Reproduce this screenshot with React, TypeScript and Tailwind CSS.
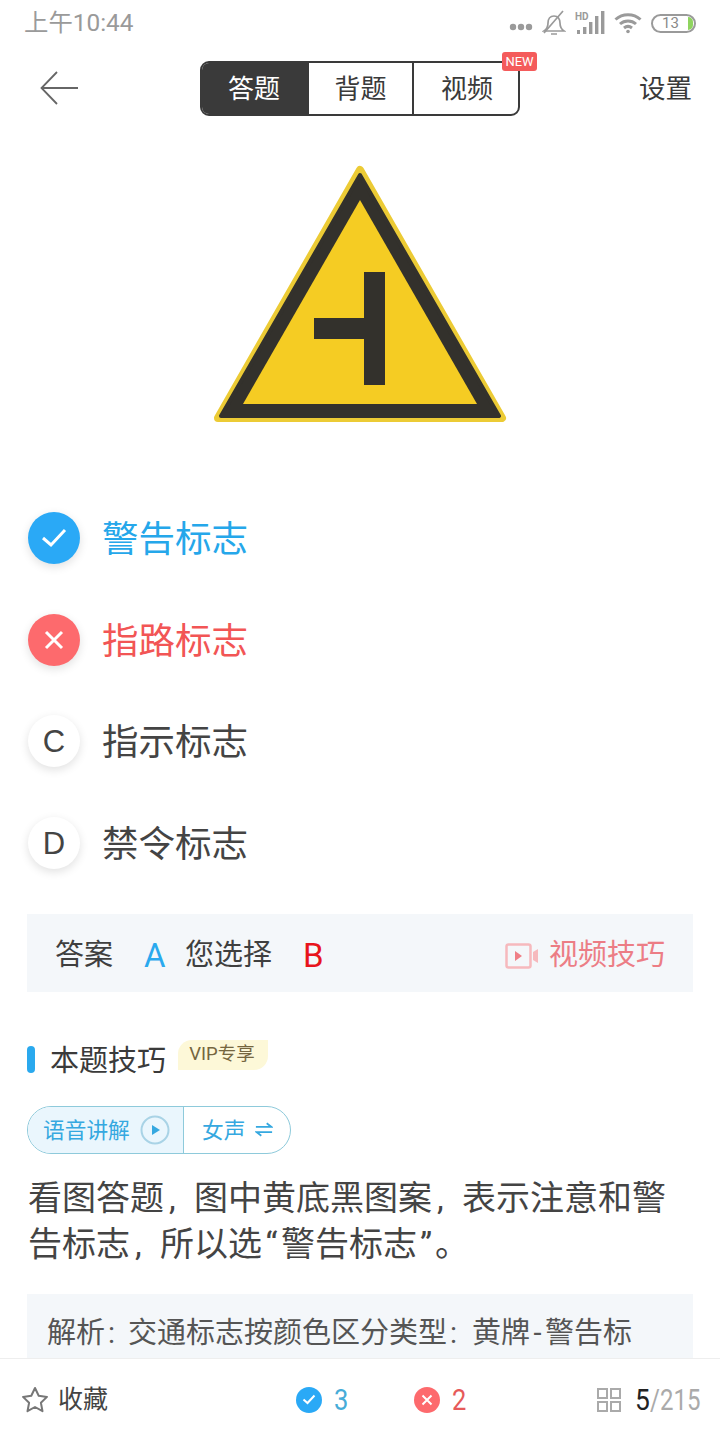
import React from "react";

function Comma() {
  return <span className="inline-block w-[30px] pl-[5px]">,</span>;
}

function Colon({ width }: { width: string }) {
  return <span className={`inline-block pl-[3px] ${width}`}>:</span>;
}

function Option({ mark, text, tone }: { mark: React.ReactNode; text: string; tone: string }) {
  return (
    <div className="flex h-[52px] items-center gap-[22px]">
      {mark}
      <span className={`pt-[4px] text-[36.500px] leading-[52px] ${tone}`}>{text}</span>
    </div>
  );
}

function Circle({ children, bg }: { children: React.ReactNode; bg: string }) {
  return (
    <div className={`flex h-[52px] w-[52px] items-center justify-center rounded-full font-['Liberation_Sans',sans-serif] text-[31px] text-[#444] shadow-[0_3px_10px_rgba(0,0,0,0.12)] ${bg}`}>
      {children}
    </div>
  );
}

function StatusIcons() {
  return (
    <div className="flex items-center gap-[9px]">
      <svg className="mt-[8px]" width="24" height="8" viewBox="0 0 24 8"><g fill="#9a9a9a"><circle cx="4" cy="4" r="3.200" /><circle cx="12" cy="4" r="3.200" /><circle cx="20" cy="4" r="3.200" /></g></svg>
      <svg width="24" height="26" viewBox="0 0 24 26" fill="none" stroke="#9a9a9a" strokeWidth="1.700">
        <path d="M2 21h20c-3-2-4-4-4-8 0-4-2-7-6-7s-6 3-6 7c0 4-1 6-4 8z" />
        <path d="M9 24h6M2 23 21 1" />
      </svg>
      <svg width="30" height="26" viewBox="0 0 30 26">
        <g fill="#9a9a9a">
          <rect x="2" y="20" width="3" height="4" /><rect x="8" y="17" width="3.400" height="7" /><rect x="14" y="12" width="3.400" height="12" /><rect x="20" y="6" width="3.400" height="18" /><rect x="26" y="1" width="3.400" height="23" />
        </g>
        <text x="0" y="10" fontSize="10" fontWeight="700" fill="#9a9a9a" fontFamily="Roboto, sans-serif">HD</text>
      </svg>
      <svg width="28" height="24" viewBox="0 0 28 24" fill="none" stroke="#9a9a9a" strokeWidth="3">
        <path d="M1.500 8.500c7-6.500 18-6.500 25 0M6 13c4.500-4 11.500-4 16 0M10 17c2.500-2 5.500-2 8 0" />
        <circle cx="14" cy="20.500" r="1.800" fill="#9a9a9a" stroke="none" />
      </svg>
      <div className="relative flex h-[19px] w-[45px] items-center justify-center rounded-full border-2 border-[#9a9a9a] pr-[6px] text-[15px] leading-none text-[#8a8a8a]">
        13
        <span className="absolute right-[1px] top-[1px] h-[13px] w-[5px] rounded-r-full bg-[#8fd45f]" />
      </div>
    </div>
  );
}

export default function App() {
  return (
    <div className="flex h-[1440px] w-[720px] flex-col overflow-hidden bg-white font-['Roboto','Noto_Sans_CJK_SC',sans-serif]">
      <div className="flex h-[46px] items-center justify-between px-[24px]">
        <span className="text-[24.400px] leading-none text-[#9a9a9a]">上午10:44</span>
        <StatusIcons />
      </div>

      <div className="relative mt-[15px] flex h-[55px] items-center justify-center">
        <svg className="absolute left-[40px] top-[10px]" width="38" height="34" viewBox="0 0 38 34" fill="none" stroke="#666" strokeWidth="1.800">
          <path d="M38 17H2M17 1 1.500 17 17 33" />
        </svg>
        <div className="relative flex h-[55px] w-[320px] rounded-[9px] border-2 border-[#3a3a3a] text-[26px] text-[#3a3a3a]">
          <div className="flex w-[107px] items-center justify-center rounded-l-[7px] bg-[#3a3a3a] pr-[3px] pt-[1px] text-white">答题</div>
          <div className="flex w-[105px] items-center justify-center border-r-2 border-[#3a3a3a] pt-[1px]">背题</div>
          <div className="flex flex-1 items-center justify-center pl-[2px] pt-[1px]">视频</div>
          <span className="absolute right-[-19px] top-[-11px] flex h-[19px] w-[35px] items-center justify-center rounded-[3px] bg-[#f45b5b] text-[13px] leading-none text-white">NEW</span>
        </div>
        <span className="absolute right-[28px] top-[10px] text-[26.500px] leading-[36px] text-[#3a3a3a]">设置</span>
      </div>

      <div className="flex flex-1 flex-col overflow-hidden">
        <div className="mt-[49px] flex justify-center">
          <svg width="294" height="260" viewBox="0 0 294 260">
            <path d="M147 5 289 253H5z" fill="#eccb35" stroke="#eccb35" strokeWidth="8" strokeLinejoin="round" />
            <path d="M147 10 286 251H8z" fill="#33312c" stroke="#33312c" strokeWidth="4" strokeLinejoin="round" />
            <path d="M147 35 264 239H30z" fill="#f5cc23" />
            <path d="M151 107h21v113h-21v-46H101v-21h50z" fill="#33312c" />
          </svg>
        </div>

        <div className="mt-[87px] flex flex-col gap-[49.500px] pl-[28px]">
          <Option
            tone="text-[#25a7ea]"
            text="警告标志"
            mark={
              <Circle bg="bg-[#2aa9f6]">
                <svg width="26" height="20" viewBox="0 0 26 20" fill="none" stroke="#fff" strokeWidth="3"><path d="M2 10l8 7L24 2" /></svg>
              </Circle>
            }
          />
          <Option
            tone="text-[#f25555]"
            text="指路标志"
            mark={
              <Circle bg="bg-[#fd6a6d]">
                <svg width="20" height="20" viewBox="0 0 20 20" fill="none" stroke="#fff" strokeWidth="3"><path d="M2 2l16 16M18 2 2 18" /></svg>
              </Circle>
            }
          />
          <Option tone="text-[#444]" text="指示标志" mark={<Circle bg="bg-white"><span className="pt-[3px]">C</span></Circle>} />
          <Option tone="text-[#444]" text="禁令标志" mark={<Circle bg="bg-white"><span className="pt-[3px]">D</span></Circle>} />
        </div>

        <div className="mx-[27px] mt-[45px] flex h-[78px] items-center justify-between bg-[#f4f7fa] px-[28px] pt-[6px]">
          <div className="flex items-center text-[29px] text-[#3f3f3f]">
            <span className="w-[89px]">答案</span>
            <span className="w-[41px] text-[33px] text-[#2aa9ee]">A</span>
            <span className="w-[118px]">您选择</span>
            <span className="text-[33px] text-[#e8141c]">B</span>
          </div>
          <div className="flex items-center gap-[10px] text-[29px] text-[#ec7d85]">
            <svg width="34" height="26" viewBox="0 0 34 26" fill="none">
              <rect x="1.500" y="1.500" width="24" height="23" rx="2" stroke="#f6b9bd" strokeWidth="2.500" />
              <path d="M10 8l7 5-7 5z" fill="#ef7f87" />
              <path d="M28 9l5-3v14l-5-3z" fill="#f6b9bd" />
            </svg>
            <span>视频技巧</span>
          </div>
        </div>

        <div className="mt-[49px] flex h-[40px] items-center pl-[27px]">
          <span className="mb-[3px] h-[27px] w-[8px] rounded-full bg-[#2aa9ee]" />
          <span className="ml-[15px] text-[29px] leading-[40px] text-[#3a3a3a]">本题技巧</span>
          <span className="mb-[12px] ml-[12px] flex h-[30px] w-[90px] items-center justify-center rounded-tl-[14px] rounded-br-[14px] bg-[#fdf8d8] pr-[2px] pt-[1px] text-[18.500px] text-[#75663f]">VIP专享</span>
        </div>

        <div className="ml-[27px] mt-[25px] flex h-[48px] w-[264px] overflow-hidden rounded-full border border-[#8ecadb] text-[21.700px] text-[#35a8e0]">
          <div className="flex w-[156px] items-center gap-[10px] border-r border-[#8ecadb] bg-[#eaf6fd] pl-[15px]">
            <span className="pt-[3px]">语音讲解</span>
            <svg className="mt-[1px]" width="30" height="30" viewBox="0 0 30 30">
              <circle cx="15" cy="15" r="13.500" fill="none" stroke="#a9d3e6" strokeWidth="2" />
              <path d="M12 10l8 5-8 5z" fill="#35a8e0" />
            </svg>
          </div>
          <div className="flex flex-1 items-center gap-[10px] pl-[18px]">
            <span className="pt-[3px]">女声</span>
            <svg width="18" height="15" viewBox="0 0 20 16" fill="none" stroke="#35a8e0" strokeWidth="2">
              <path d="M1 5h17l-5-4M19 11H2l5 4" />
            </svg>
          </div>
        </div>

        <p className="mx-[28px] mt-[21px] whitespace-nowrap text-[34px] leading-[46px] text-[#444]">
          看图答题<Comma />图中黄底黑图案<Comma />表示注意和警
          <br />
          告标志<Comma />所以选<span className="inline-block w-[19px] text-center">“</span>警告标志<span className="inline-block w-[18px] text-center">”</span>。
        </p>

        <div className="mx-[27px] mt-[27px] flex-1 bg-[#f4f7fa] px-[20px] pt-[19px] text-[29px] leading-[40px] whitespace-nowrap text-[#555]">
          解析<Colon width="w-[23px]" />交通标志按颜色区分类型<Colon width="w-[25px]" />黄牌<span className="inline-block w-[15px] text-center">-</span>警告标
        </div>
      </div>

      <div className="flex h-[82px] items-center border-t border-[#eeeeee] bg-white pl-[21px] pr-[19px]">
        <svg width="28" height="28" viewBox="0 0 28 28" fill="none" stroke="#777" strokeWidth="2" strokeLinejoin="round">
          <path d="M14 2l3.700 7.800 8.300 1.100-6.100 5.800 1.600 8.500L14 21l-7.500 4.200 1.600-8.500L2 10.900l8.300-1.100z" />
        </svg>
        <span className="ml-[9px] text-[25px] text-[#444]">收藏</span>
        <div className="ml-[188px] flex h-[26px] w-[26px] items-center justify-center rounded-full bg-[#2aa9f6]">
          <svg width="14" height="11" viewBox="0 0 14 11" fill="none" stroke="#fff" strokeWidth="2"><path d="M1.500 5.500 5.500 9l7-7.500" /></svg>
        </div>
        <span className="ml-[12px] inline-block origin-left scale-x-[0.85] text-[30px] text-[#47acd8]">3</span>
        <div className="ml-[63px] flex h-[26px] w-[26px] items-center justify-center rounded-full bg-[#fd6a6d]">
          <svg width="12" height="12" viewBox="0 0 12 12" fill="none" stroke="#fff" strokeWidth="2"><path d="M1.500 1.500l9 9M10.500 1.500l-9 9" /></svg>
        </div>
        <span className="ml-[12px] inline-block origin-left scale-x-[0.85] text-[30px] text-[#e65a5a]">2</span>
        <div className="ml-auto mr-[2px] flex items-center">
          <svg width="26" height="26" viewBox="0 0 26 26" fill="none" stroke="#aaa" strokeWidth="2">
            <rect x="2" y="2" width="9" height="9" /><rect x="15" y="2" width="9" height="9" /><rect x="2" y="15" width="9" height="9" /><rect x="15" y="15" width="9" height="9" />
          </svg>
          <span className="ml-[13px] inline-block w-[15px] origin-left scale-x-[0.88] text-[30px] text-[#222]">5</span>
          <span className="inline-block w-[49px] origin-left scale-x-[0.8] whitespace-nowrap text-[30px] text-[#aaa]">/215</span>
        </div>
      </div>
    </div>
  );
}
